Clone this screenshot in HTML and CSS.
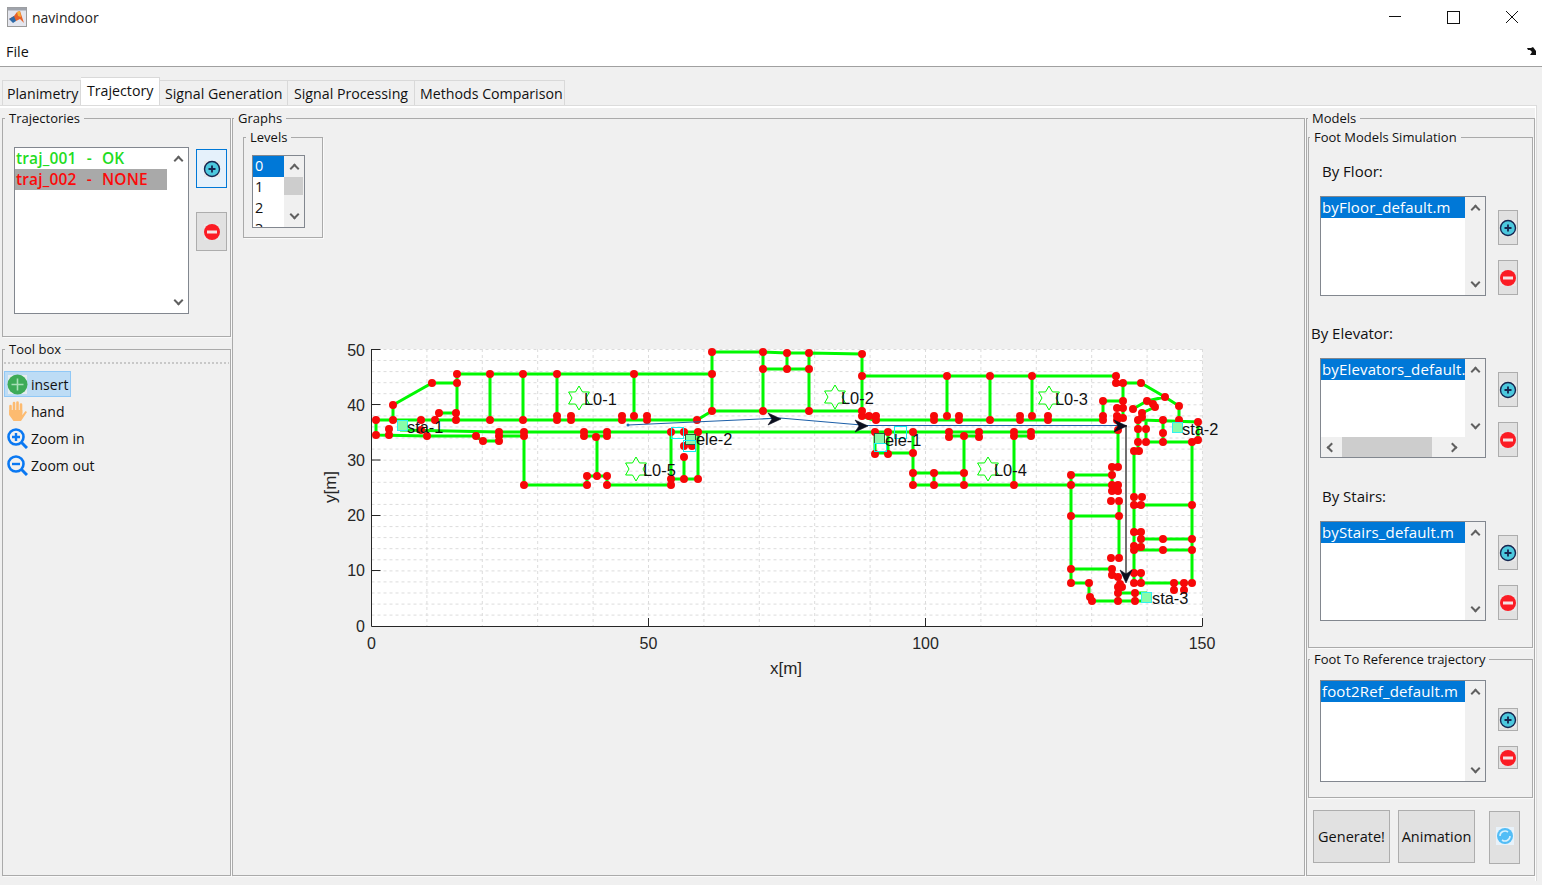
FILE: index.html
```html
<!DOCTYPE html>
<html lang="en">
<head>
  <meta charset="UTF-8">
  <title>navindoor</title>
  <link rel="stylesheet" href="styles.css">
</head>
<body>

  <!-- Shared icons -->
  <svg class="sprite" width="0" height="0">
    <symbol id="ico-add" viewBox="0 0 18 18">
      <rect x="1" y="1" width="16" height="16" fill="#e8e8e8"/>
      <circle cx="9" cy="9" r="7.5" fill="#4cc8de" stroke="#16244f" stroke-width="1.4"/>
      <path d="M5.5 9h7M9 5.5v7" stroke="#16244f" stroke-width="1.8"/>
    </symbol>
    <symbol id="ico-del" viewBox="0 0 18 18">
      <rect x="1" y="1" width="16" height="16" fill="#e8e8e8"/>
      <circle cx="9" cy="9" r="8" fill="#fb1c24"/>
      <path d="M4 9h10" stroke="#f4e4e4" stroke-width="3"/>
    </symbol>
    <symbol id="star" viewBox="-13 -13 26 26">
      <polygon points="0,-12 3.5,-6.06 10.4,-6 7,0 10.4,6 3.5,6.06 0,12 -3.5,6.06 -10.4,6 -7,0 -10.4,-6 -3.5,-6.06" fill="none" stroke="#00f800" stroke-width="1"/>
    </symbol>
    <symbol id="head" viewBox="-1 -1 15 14">
      <path d="M0 0L13 6L0 12L4 6Z" fill="#0b0f1e" stroke="#0b0f1e" stroke-width="0.6"/>
    </symbol>
  </svg>

  <!-- Title bar -->
  <div class="titlebar">
    <svg class="app-icon" width="20" height="20" viewBox="0 0 20 20">
      <rect x="0.5" y="0.5" width="19" height="19" fill="#e4e6ee" stroke="#9a9a9a"/>
      <rect x="0.5" y="0.5" width="19" height="3" fill="#9fa3ab"/>
      <path d="M2 12L7 9L10 5L13 4L17 16L13 12L9 14Z" fill="#e8622a"/>
      <path d="M2 12L7 9L9 14L6 16Z" fill="#2e6aa8"/>
      <path d="M10 5L13 4L14 10L11 9Z" fill="#f6b23c"/>
    </svg>
    <span class="app-title">navindoor</span>
    <div class="win-controls">
      <svg width="14" height="14" viewBox="0 0 14 14"><path d="M0 6.5h12" stroke="#111"/></svg>
      <svg width="14" height="14" viewBox="0 0 14 14"><rect x="0.5" y="1.5" width="12" height="12" fill="none" stroke="#111"/></svg>
      <svg width="14" height="14" viewBox="0 0 14 14"><path d="M1 1L13 13M13 1L1 13" stroke="#111"/></svg>
    </div>
  </div>

  <!-- Menu bar -->
  <div class="menubar">
    <span>File</span>
    <svg width="10" height="8" viewBox="0 0 10 8"><path d="M0 1H4L6 0L9 4V8H3L5 5L3 3H1Z" fill="#111"/></svg>
  </div>

  <!-- Tabs -->
  <div class="tabs">
    <div class="tab tab-plan">Planimetry</div>
    <div class="tab tab-traj active">Trajectory</div>
    <div class="tab tab-gen">Signal Generation</div>
    <div class="tab tab-proc">Signal Processing</div>
    <div class="tab tab-comp">Methods Comparison</div>
  </div>

  <div class="tabpanel">

    <!-- Left column -->
    <div class="leftcol">
      <fieldset class="group traj-group">
        <legend>Trajectories</legend>
        <div class="traj-row">
          <div class="listbox traj-list">
            <div class="items">
              <div class="item item-ok">traj_001 - OK</div>
              <div class="item item-none">traj_002 - NONE</div>
            </div>
            <div class="vscroll plain"><i class="chev up"></i><i class="chev down"></i></div>
          </div>
          <div class="traj-btns">
            <button class="ibtn big hot"><svg width="18" height="18"><use href="#ico-add"/></svg></button>
            <button class="ibtn big"><svg width="18" height="18"><use href="#ico-del"/></svg></button>
          </div>
        </div>
      </fieldset>

      <fieldset class="group tool-group">
        <legend>Tool box</legend>
        <div class="dots"></div>
        <div class="tool selected">
          <svg width="21" height="21" viewBox="0 0 21 21">
            <rect x="1" y="1" width="19" height="19" fill="#e6ecf0"/>
            <circle cx="10.5" cy="10.5" r="10" fill="#3dab58"/>
            <path d="M4.5 10.5h12M10.5 4.5v12" stroke="#a8e0b8" stroke-width="1.6"/>
          </svg>
          <span>insert</span>
        </div>
        <div class="tool">
          <svg width="21" height="21" viewBox="0 0 21 21">
            <path d="M3.5 5V13M7 2V11M10.5 1.500V11M14 3.500V12" stroke="#fdbb70" stroke-width="2.6" stroke-linecap="round"/>
            <path d="M2.200 9H15.300V14L18.500 10L20 11L14 20H6.500L2.200 14Z" fill="#fdbb70"/>
          </svg>
          <span>hand</span>
        </div>
        <div class="tool">
          <svg width="21" height="21" viewBox="0 0 21 21">
            <circle cx="9" cy="9" r="7.5" fill="none" stroke="#0a78f2" stroke-width="2.6"/>
            <path d="M14.5 14.5L20 20" stroke="#0a78f2" stroke-width="3"/>
            <path d="M5 9h8M9 5v8" stroke="#0a78f2" stroke-width="2.4"/>
          </svg>
          <span>Zoom in</span>
        </div>
        <div class="tool">
          <svg width="21" height="21" viewBox="0 0 21 21">
            <circle cx="9" cy="9" r="7.5" fill="none" stroke="#0a78f2" stroke-width="2.6"/>
            <path d="M14.5 14.5L20 20" stroke="#0a78f2" stroke-width="3"/>
            <path d="M5 9h8" stroke="#0a78f2" stroke-width="2.4"/>
          </svg>
          <span>Zoom out</span>
        </div>
      </fieldset>
    </div>

    <!-- Graphs -->
    <fieldset class="group graphs-group">
      <legend>Graphs</legend>
      <fieldset class="group levels-group">
        <legend>Levels</legend>
        <div class="listbox levels-list">
          <div class="items">
            <div class="item level selected">0</div>
            <div class="item level">1</div>
            <div class="item level">2</div>
            <div class="item level">3</div>
          </div>
          <div class="vscroll levels-scroll">
            <i class="chev up"></i>
            <b class="levels-thumb"></b>
            <i class="chev down"></i>
          </div>
        </div>
      </fieldset>

      <svg class="plot" width="1070" height="630" viewBox="233 240 1070 630">
        <rect x="371.5" y="349" width="831" height="277" fill="#fff"/>

        <!-- grid -->
        <path class="grid" d="M426.9 349v277m55.4-277v277m55.4-277v277m55.4-277v277m55.4-277v277m55.4-277v277m55.4-277v277m55.4-277v277m55.4-277v277m55.4-277v277m55.4-277v277m55.4-277v277m55.4-277v277m55.4-277v277m55.4-277v277"/>
        <path class="grid" d="M371.5 349.5h831m-831 11h831m-831 11.1h831m-831 11.1h831m-831 11h831m-831 11.1h831m-831 11.1h831m-831 11h831m-831 11.1h831m-831 11.1h831m-831 11.1h831m-831 11h831m-831 11.1h831m-831 11.1h831m-831 11h831m-831 11.1h831m-831 11.1h831m-831 11h831m-831 11.1h831m-831 11.1h831m-831 11.1h831m-831 11h831m-831 11.1h831m-831 11.1h831m-831 11h831"/>

        <!-- axes -->
        <path class="axis" d="M371.5 349V626.5H1202.5"/>
        <path class="axis" d="M371.5 349.5h9M371.5 404.5h9M371.5 460h9M371.5 515.5h9M371.5 570.5h9M648.5 626v-8M925.5 626v-8M1202.5 626v-8"/>
        <g class="tick-y">
          <text x="365" y="356">50</text>
          <text x="365" y="411">40</text>
          <text x="365" y="466">30</text>
          <text x="365" y="521">20</text>
          <text x="365" y="576">10</text>
          <text x="365" y="632">0</text>
        </g>
        <g class="tick-x">
          <text x="371.5" y="649">0</text>
          <text x="648.5" y="649">50</text>
          <text x="925.5" y="649">100</text>
          <text x="1202" y="649">150</text>
        </g>
        <text class="axis-label" x="786" y="674">x[m]</text>
        <text class="axis-label" transform="translate(336 487) rotate(-90)">y[m]</text>

        <!-- walls -->
        <path class="walls" d="M376 420H697L712 411H862M862 416L873 420H1103M376 420V435L427 436H475L483 441H499M499 436H524M400 430L498 432H1118
          M457 374H712M393 405L432 383H457M457 374V420M393 405V420M439 413H456M490 374V420M523 374V420M557 374V420M634 374V416
          M524 432V485H586M607 485H671M587 476H607M597 437V476M587 476V485M607 476V485M584 436H607M671 432V485M671 479H698M684 457V479M698 432V479
          M712 352V411M712 352H763L787 353H809L862 354M763 352V411M763 369H809M787 353V369M809 353V411M862 354V416
          M862 376H1116M947 376V416M990 376V420M1032 376V416M1116 376V383H1141L1165 397L1179 406V420M1123 383V420M1103 401H1123M1103 401V420M1117 408H1123
          M1133 409L1147 401L1165 397M1147 401L1155 407M1142 413L1155 407M1142 420L1198 422V440M1143 442H1198M1138 420V450M1146 420V442M1163 420V442M1134 450V583M1192 442V583
          M1118 430V467M1112 467H1118M1112 467V485M1071 475H1112M1071 475V583M913 432V485H1118M913 473H964M934 473V485M964 436V485M949 436H979M875 453H913M875 432V453M888 432V453M1014 432V485M1014 436H1031
          M1071 516H1119M1071 569H1112M1119 500V558M1071 583H1089V597L1092 601H1147M1118 593H1147M1118 593V601M1135 593V601
          M1134 505H1192M1141 539H1192M1134 550H1192M1141 532V547M1140 583H1192M1174 583V592M1184 583V592M1141 573V583"/>

        <!-- wall nodes -->
        <path class="nodes" d="M376 420h0M376 435h0M393 405h0M393 420h0M389 429h0M389 435h0M432 383h0M457 374h0M457 383h0M439 413h0M435 420h0M456 413h0M456 420h0M421 420h0M421 430h0M427 436h0M476 436h0M483 441h0M499 432h0M499 436h0M499 441h0M490 374h0M490 420h0M523 374h0M523 420h0M524 432h0M524 436h0M524 485h0M557 374h0M557 416h0M557 420h0M571 416h0M571 420h0M634 374h0M634 416h0M622 416h0M622 420h0M647 416h0M647 420h0M712 374h0M712 352h0M712 411h0M697 420h0M584 432h0M584 436h0M596 437h0M607 432h0M607 436h0M587 476h0M597 476h0M607 476h0M587 485h0M607 485h0M671 432h0M671 479h0M671 485h0M684 432h0M684 446h0M692 446h0M698 432h0M684 457h0M684 479h0M698 479h0
          M763 352h0M787 353h0M809 353h0M862 354h0M763 369h0M787 369h0M809 369h0M763 411h0M809 411h0M862 376h0M862 411h0M862 416h0M869 416h0M876 416h0M876 420h0M934 416h0M934 420h0M947 376h0M947 416h0M959 416h0M959 420h0M990 376h0M990 420h0M875 432h0M888 432h0M913 432h0M875 454h0M888 454h0M913 453h0M913 473h0M934 473h0M964 473h0M913 485h0M934 485h0M964 485h0M949 432h0M949 437h0M964 436h0M979 432h0M979 437h0
          M1032 376h0M1032 416h0M1020 416h0M1020 420h0M1048 416h0M1048 420h0M1014 432h0M1014 436h0M1031 432h0M1031 436h0M1014 485h0M1116 376h0M1116 383h0M1123 383h0M1141 383h0M1165 397h0M1179 406h0M1179 420h0M1103 401h0M1123 401h0M1117 408h0M1123 408h0M1133 409h0M1147 401h0M1153 404h0M1155 407h0M1142 413h0M1103 416h0M1103 420h0M1117 416h0M1117 420h0M1123 418h0M1138 420h0M1142 417h0M1163 420h0M1198 422h0M1163 433h0M1163 442h0M1198 440h0M1192 442h0M1138 429h0M1146 429h0M1138 442h0M1146 442h0M1134 451h0M1139 451h0M1112 467h0M1118 467h0M1112 475h0M1071 475h0M1071 485h0M1112 485h0M1118 485h0M1112 491h0M1118 491h0M1134 497h0M1142 497h0M1118 430h0
          M1111 501h0M1119 501h0M1134 505h0M1141 505h0M1192 505h0M1071 516h0M1119 516h0M1134 532h0M1141 532h0M1141 539h0M1163 539h0M1192 539h0M1134 550h0M1141 547h0M1134 546h0M1163 550h0M1192 550h0M1111 558h0M1119 558h0M1071 569h0M1112 569h0M1112 575h0M1071 583h0M1089 583h0M1134 573h0M1141 573h0M1134 583h0M1141 583h0M1174 583h0M1184 583h0M1192 583h0M1174 590h0M1184 590h0M1090 597h0M1092 601h0M1118 593h0M1118 601h0M1135 593h0M1135 601h0M1118 577h0M1120 584h0M1122 587h0M1118 587h0"/>

        <!-- stairs and elevators -->
        <rect class="spot" x="397.5" y="420.5" width="10" height="10"/>
        <rect class="spot" x="1172.5" y="422.5" width="10" height="10"/>
        <rect class="spot" x="1141.5" y="592.5" width="10" height="10"/>
        <rect class="spot dark" x="685.5" y="434.5" width="10" height="10"/>
        <rect class="spot dark" x="874.5" y="433.5" width="10" height="10"/>
        <rect class="spot-box" x="671.5" y="427.5" width="12" height="11"/>
        <rect class="spot-box" x="683.5" y="440.5" width="12" height="11"/>
        <rect class="spot-box" x="874.5" y="443.5" width="12" height="8"/>
        <rect class="spot-box" x="894.5" y="426.5" width="12" height="12"/>

        <!-- trajectory -->
        <path class="track" d="M628 425L760 419L780 418L867 425.5H1126"/>
        <path class="track-v" d="M1126 425V580"/>
        <circle cx="628" cy="425" r="1.5" fill="#1f6fb5"/>
        <use href="#head" x="767" y="412" width="15" height="14"/>
        <use href="#head" x="854" y="419" width="15" height="14"/>
        <use href="#head" x="1113" y="419" width="15" height="14"/>
        <use href="#head" width="15" height="14" transform="translate(1133 569) rotate(90)"/>

        <!-- labels -->
        <use href="#star" x="566" y="385" width="26" height="26"/>
        <use href="#star" x="822" y="384" width="26" height="26"/>
        <use href="#star" x="1036" y="385" width="26" height="26"/>
        <use href="#star" x="975" y="456" width="26" height="26"/>
        <use href="#star" x="623" y="456" width="26" height="26"/>
        <g class="tag">
          <text x="584" y="405">L0-1</text>
          <text x="841" y="404">L0-2</text>
          <text x="1055" y="405">L0-3</text>
          <text x="994" y="476">L0-4</text>
          <text x="643" y="476">L0-5</text>
          <text x="407" y="433">sta-1</text>
          <text x="1182" y="435">sta-2</text>
          <text x="1152" y="604">sta-3</text>
          <text x="696" y="445">ele-2</text>
          <text x="885" y="446">ele-1</text>
        </g>
      </svg>
    </fieldset>

    <!-- Models -->
    <fieldset class="group models-group">
      <legend>Models</legend>

      <fieldset class="group foot-group">
        <legend>Foot Models Simulation</legend>

        <div class="model-label first">By Floor:</div>
        <div class="model-row">
          <div class="listbox model-list">
            <div class="items"><div class="item selected">byFloor_default.m</div></div>
            <div class="vscroll"><i class="chev up"></i><i class="chev down"></i></div>
          </div>
          <div class="model-btns">
            <button class="ibtn"><svg width="18" height="18"><use href="#ico-add"/></svg></button>
            <button class="ibtn"><svg width="18" height="18"><use href="#ico-del"/></svg></button>
          </div>
        </div>

        <div class="model-label outdent">By Elevator:</div>
        <div class="model-row">
          <div class="listbox model-list with-h">
            <div class="list-top">
              <div class="items"><div class="item selected">byElevators_default.m</div></div>
              <div class="vscroll"><i class="chev up"></i><i class="chev down"></i></div>
            </div>
            <div class="hscroll"><i class="chev left"></i><b class="h-thumb"></b><i class="chev right"></i></div>
          </div>
          <div class="model-btns">
            <button class="ibtn"><svg width="18" height="18"><use href="#ico-add"/></svg></button>
            <button class="ibtn"><svg width="18" height="18"><use href="#ico-del"/></svg></button>
          </div>
        </div>

        <div class="model-label">By Stairs:</div>
        <div class="model-row">
          <div class="listbox model-list">
            <div class="items"><div class="item selected">byStairs_default.m</div></div>
            <div class="vscroll"><i class="chev up"></i><i class="chev down"></i></div>
          </div>
          <div class="model-btns">
            <button class="ibtn"><svg width="18" height="18"><use href="#ico-add"/></svg></button>
            <button class="ibtn"><svg width="18" height="18"><use href="#ico-del"/></svg></button>
          </div>
        </div>
      </fieldset>

      <fieldset class="group ref-group">
        <legend>Foot To Reference trajectory</legend>
        <div class="model-row">
          <div class="listbox model-list ref-list">
            <div class="items"><div class="item selected">foot2Ref_default.m</div></div>
            <div class="vscroll"><i class="chev up"></i><i class="chev down"></i></div>
          </div>
          <div class="model-btns ref-btns">
            <button class="ibtn"><svg width="18" height="18"><use href="#ico-add"/></svg></button>
            <button class="ibtn"><svg width="18" height="18"><use href="#ico-del"/></svg></button>
          </div>
        </div>
      </fieldset>

      <div class="actions">
        <button class="action">Generate!</button>
        <button class="action">Animation</button>
        <button class="action refresh">
          <svg width="18" height="18" viewBox="0 0 18 18">
            <rect width="18" height="18" fill="#e8f2fa"/>
            <circle cx="9" cy="9" r="8" fill="#52bdf6"/>
            <path d="M4 9a5 5 0 0 1 8-4M14 9a5 5 0 0 1-8 4" fill="none" stroke="#d6f0fd" stroke-width="1.6"/>
          </svg>
        </button>
      </div>
    </fieldset>
  </div>

</body>
</html>
```

FILE: styles.css
```css
* {
  box-sizing: border-box;
}

html, body {
  margin: 0;
  height: 885px;
  overflow: hidden;
}

body {
  font-family: 'Open Sans', 'Noto Sans', sans-serif;
  font-size: 13px;
  color: #111;
  background: #f0f0f0;
}

.sprite {
  position: absolute;
}

/* Window chrome */
.titlebar {
  display: flex;
  align-items: center;
  height: 34px;
  padding-left: 7px;
  background: #fff;
}

.app-title {
  margin-left: 5px;
  font-size: 14px;
  color: #222;
}

.win-controls {
  display: flex;
  gap: 44px;
  margin-left: auto;
  margin-right: 23px;
}

.menubar {
  display: flex;
  align-items: center;
  justify-content: space-between;
  height: 33px;
  padding: 2px 5px 0 6px;
  font-size: 14.4px;
  background: #fff;
  border-bottom: 1px solid #a0a0a0;
}

.tabs {
  display: flex;
  align-items: flex-end;
  height: 38px;
  padding-left: 2px;
}

.tab {
  height: 25px;
  padding: 3px 0 0 5px;
  font-size: 14.2px;
  white-space: nowrap;
  background: #f0f0f0;
  border: 1px solid #d9d9d9;
  border-bottom: none;
  border-left: none;
}

.tab-plan { width: 79px; padding-left: 4px; border-left: 1px solid #d9d9d9; }
.tab-traj { width: 79px; }
.tab-gen { width: 128px; }
.tab-proc { width: 127px; padding-left: 6px; }
.tab-comp { width: 150px; }

.tab.active {
  height: 28px;
  padding-top: 3px;
  padding-left: 6px;
  background: #fff;
}

.tabpanel {
  display: flex;
  width: 1537px;
  height: 776px;
  padding: 4px 0 0 2px;
  border: 1px solid #dcdcdc;
  border-bottom: none;
  border-left: none;
  box-shadow: inset 0 2px 0 #fff, inset -1px 0 0 #fff;
}

/* Titled panels */
.group {
  min-width: 0;
  margin: 0;
  padding: 0;
  border: 1px solid #aaa;
  box-shadow: 1px 1px 0 #fafafa;
}

.group legend {
  height: 16px;
  margin-left: 2px;
  padding: 0 4px;
  font-size: 13px;
  line-height: 16px;
  white-space: nowrap;
}

.leftcol {
  display: flex;
  flex-direction: column;
  gap: 4px;
  width: 229px;
  margin-right: 1px;
}

.traj-group {
  height: 227px;
}

.tool-group {
  height: 535px;
}

.graphs-group {
  width: 1073px;
  height: 766px;
  margin-right: 1px;
}

.models-group {
  width: 229px;
  height: 766px;
}

.graphs-group > legend,
.models-group > legend {
  margin-left: 1px;
}

/* List boxes */
.listbox {
  display: flex;
  overflow: hidden;
  background: #fff;
  border: 1px solid #82878f;
}

.items {
  flex: 1;
  min-width: 0;
  overflow: hidden;
}

.item {
  height: 21px;
  padding-left: 1px;
  overflow: hidden;
  font-size: 15px;
  line-height: 20px;
  letter-spacing: 0.15px;
  white-space: nowrap;
}

.item.selected {
  color: #fff;
  background: #0078d7;
}

.vscroll {
  display: flex;
  flex-direction: column;
  align-items: center;
  justify-content: space-between;
  flex: none;
  width: 20px;
  padding: 9px 0;
  background: #f0f0f0;
}

.vscroll.plain {
  background: #fff;
}

.chev {
  display: block;
  width: 7px;
  height: 7px;
  border-top: 2px solid #606060;
  border-left: 2px solid #606060;
}

.chev.up { transform: rotate(45deg); }
.chev.down { transform: rotate(225deg); }
.chev.left { transform: rotate(-45deg); }
.chev.right { transform: rotate(135deg); }

.ibtn {
  display: flex;
  align-items: center;
  justify-content: center;
  width: 20px;
  height: 35px;
  padding: 0;
  background: #e1e1e1;
  border: 1px solid #adadad;
}

/* Trajectories */
.traj-row {
  display: flex;
  padding: 21px 0 0 11px;
}

.traj-list {
  width: 175px;
  height: 167px;
}

.item-ok,
.item-none {
  font-size: 15.5px;
  font-weight: 600;
  word-spacing: 6px;
}

.item-ok {
  color: #1fdc1f;
}

.item-none {
  width: 152px;
  color: #fb0a0a;
  background: #a9a9a9;
}

.traj-btns {
  display: flex;
  flex-direction: column;
  gap: 24px;
  margin: 2px 0 0 7px;
}

.ibtn.big {
  width: 31px;
  height: 39px;
}

.ibtn.hot {
  background: #e5f1fb;
  border-color: #0078d7;
}

/* Tool box */
.dots {
  height: 2px;
  margin: 5px 1px 7px;
  background: repeating-linear-gradient(90deg, #c8c8c8 0 2px, transparent 2px 4px);
}

.tool {
  display: flex;
  align-items: center;
  gap: 3px;
  width: 67px;
  height: 26px;
  margin: 0 0 1px 1px;
  padding-left: 2px;
  font-size: 14px;
  white-space: nowrap;
  border: 1px solid transparent;
}

.tool svg {
  flex: none;
}

.tool.selected {
  background: #bddcf5;
  border-color: #90c8f6;
}

/* Graphs */
.levels-group {
  width: 80px;
  height: 109px;
  margin: 3px 0 0 10px;
}

.levels-list {
  width: 53px;
  height: 73px;
  margin: 10px 0 0 8px;
}

.level {
  padding-left: 2px;
  font-size: 14.5px;
}

.levels-scroll {
  position: relative;
}

.levels-thumb {
  position: absolute;
  top: 21px;
  left: 0;
  width: 19px;
  height: 18px;
  background: #cdcdcd;
}

.plot {
  display: block;
  margin-top: 2px;
}

.grid {
  fill: none;
  stroke: #dcdcdc;
  stroke-dasharray: 3 3;
}

.axis {
  fill: none;
  stroke: #262626;
}

.plot text {
  font-family: 'Liberation Sans', Arial, sans-serif;
  font-size: 16px;
  fill: #262626;
}

.tick-y text {
  text-anchor: end;
}

.tick-x text,
.plot .axis-label {
  text-anchor: middle;
}

.plot .axis-label {
  font-size: 17px;
}

.plot .tag text {
  font-size: 16.4px;
  fill: #111;
}

.walls {
  fill: none;
  stroke: #00f800;
  stroke-width: 3;
}

.nodes {
  fill: none;
  stroke: #f70808;
  stroke-width: 8;
  stroke-linecap: round;
}

.spot {
  fill: #88fca8;
  stroke: #30f0f0;
}

.spot.dark {
  stroke: #2a5a3a;
}

.spot-box {
  fill: none;
  stroke: #12eef0;
}

.track {
  fill: none;
  stroke: #1c5fa8;
  stroke-width: 1.2;
}

.track-v {
  fill: none;
  stroke: #111;
  stroke-width: 1.2;
}

/* Models */
.foot-group {
  width: 225px;
  height: 519px;
  margin: 3px 0 0 1px;
  padding-left: 11px;
}

.ref-group {
  width: 225px;
  height: 147px;
  margin: 3px 0 0 1px;
  padding: 13px 0 0 11px;
}

.foot-group legend,
.ref-group legend {
  margin-left: -10px;
}

.model-label {
  height: 18px;
  margin: 29px 0 16px 2px;
  font-size: 15px;
  line-height: 18px;
}

.model-label.first {
  margin-top: 17px;
}

.model-label.outdent {
  margin-top: 28px;
  margin-left: -9px;
}

.model-row {
  display: flex;
}

.model-list {
  width: 166px;
  height: 100px;
}

.model-list.with-h {
  flex-direction: column;
}

.list-top {
  display: flex;
  flex: 1;
  min-height: 0;
}

.hscroll {
  display: flex;
  align-items: center;
  flex: none;
  height: 20px;
  padding-left: 7px;
  background: #f0f0f0;
}

.h-thumb {
  width: 90px;
  height: 20px;
  margin: 0 17px 0 7px;
  background: #cdcdcd;
}

.ref-list {
  height: 102px;
}

.model-btns {
  display: flex;
  flex-direction: column;
  gap: 15px;
  margin-left: 12px;
  padding-top: 14px;
}

.ref-btns {
  padding-top: 28px;
}

.ref-btns .ibtn {
  height: 23px;
}

.actions {
  display: flex;
  align-items: flex-start;
  gap: 8px;
  margin: 12px 0 0 6px;
}

.action {
  width: 77px;
  height: 53px;
  padding: 0;
  font-family: inherit;
  font-size: 14.5px;
  color: #111;
  background: #e1e1e1;
  border: 1px solid #adadad;
}

.action.refresh {
  width: 31px;
  margin: 1px 0 0 6px;
}
```
